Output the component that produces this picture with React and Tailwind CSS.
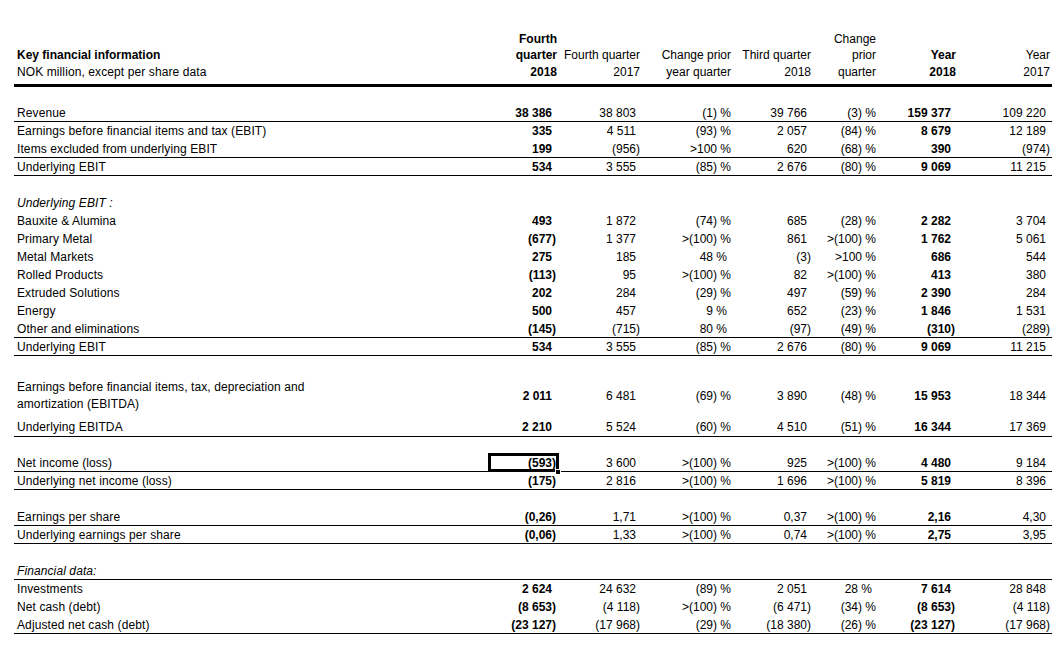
import React from "react";

const COLS = "grid grid-cols-[474px_69px_84px_91px_80px_65px_79px_95px]";

// [label, values, opts]
const ROWS = [
  { gap: "h-[17px]" },
  { label: "Revenue", v: ["38 386", "38 803", "(1) %", "39 766", "(3) %", "159 377", "109 220"], line: true },
  { label: "Earnings before financial items and tax (EBIT)", v: ["335", "4 511", "(93) %", "2 057", "(84) %", "8 679", "12 189"] },
  { label: "Items excluded from underlying EBIT", v: ["199", "(956)", ">100 %", "620", "(68) %", "390", "(974)"], line: true },
  { label: "Underlying EBIT", v: ["534", "3 555", "(85) %", "2 676", "(80) %", "9 069", "11 215"], line: true },
  { gap: "h-[18px]" },
  { label: "Underlying EBIT :", italic: true },
  { label: "Bauxite & Alumina", v: ["493", "1 872", "(74) %", "685", "(28) %", "2 282", "3 704"] },
  { label: "Primary Metal", v: ["(677)", "1 377", ">(100) %", "861", ">(100) %", "1 762", "5 061"] },
  { label: "Metal Markets", v: ["275", "185", "48 %", "(3)", ">100 %", "686", "544"] },
  { label: "Rolled Products", v: ["(113)", "95", ">(100) %", "82", ">(100) %", "413", "380"] },
  { label: "Extruded Solutions", v: ["202", "284", "(29) %", "497", "(59) %", "2 390", "284"] },
  { label: "Energy", v: ["500", "457", "9 %", "652", "(23) %", "1 846", "1 531"] },
  { label: "Other and eliminations", v: ["(145)", "(715)", "80 %", "(97)", "(49) %", "(310)", "(289)"], line: true },
  { label: "Underlying EBIT", v: ["534", "3 555", "(85) %", "2 676", "(80) %", "9 069", "11 215"], line: true },
  { gap: "h-[21px]" },
  {
    label: (
      <>
        Earnings before financial items, tax, depreciation and
        <br />
        amortization (EBITDA)
      </>
    ),
    v: ["2 011", "6 481", "(69) %", "3 890", "(48) %", "15 953", "18 344"],
    h: "h-[37px]",
  },
  { label: "Underlying EBITDA", v: ["2 210", "5 524", "(60) %", "4 510", "(51) %", "16 344", "17 369"], line: true, h: "h-[23px] pt-[4px]" },
  { gap: "h-[17px]" },
  { label: "Net income (loss)", v: ["(593)", "3 600", ">(100) %", "925", ">(100) %", "4 480", "9 184"], line: true, selected: true },
  { label: "Underlying net income (loss)", v: ["(175)", "2 816", ">(100) %", "1 696", ">(100) %", "5 819", "8 396"], line: true },
  { gap: "h-[18px]" },
  { label: "Earnings per share", v: ["(0,26)", "1,71", ">(100) %", "0,37", ">(100) %", "2,16", "4,30"], line: true },
  { label: "Underlying earnings per share", v: ["(0,06)", "1,33", ">(100) %", "0,74", ">(100) %", "2,75", "3,95"], line: true },
  { gap: "h-[18px]" },
  { label: "Financial data:", italic: true, line: true },
  { label: "Investments", v: ["2 624", "24 632", "(89) %", "2 051", "28 %", "7 614", "28 848"] },
  { label: "Net cash (debt)", v: ["(8 653)", "(4 118)", ">(100) %", "(6 471)", "(34) %", "(8 653)", "(4 118)"] },
  { label: "Adjusted net cash (debt)", v: ["(23 127)", "(17 968)", "(29) %", "(18 380)", "(26) %", "(23 127)", "(17 968)"], line: true },
];

// Excel-style: plain positives leave room for a closing paren
function Num({ s }) {
  const pad = !s.includes("(") && !s.startsWith(">");
  return (
    <>
      {s}
      {pad && <span className="invisible">)</span>}
    </>
  );
}

function Row({ r }) {
  const bold = (i) => i === 0 || i === 5;
  return (
    <div
      className={`${COLS} ${r.h || "h-[18px]"} items-center ${r.line ? "border-b border-black" : ""}`}
    >
      <div className={`pl-[3px] leading-[17px] tracking-[0.1px] ${r.italic ? "italic" : ""}`}>{r.label}</div>
      {(r.v || ["", "", "", "", "", "", ""]).map((s, i) => (
        <div
          key={i}
          className={`relative text-right pr-[1px] whitespace-nowrap ${bold(i) ? "font-bold" : ""}`}
        >
          <Num s={s} />
          {r.selected && i === 0 && (
            <>
              <div className="absolute left-0 top-[-1px] w-[71px] h-[18px] border-[3px] border-b-2 border-black" />
              <div className="absolute right-[-4px] bottom-[-3px] w-[6px] h-[6px] bg-black border border-white" />
            </>
          )}
        </div>
      ))}
    </div>
  );
}

export default function App() {
  return (
    <div
      className="min-h-[670px] w-[1056px] bg-white text-black text-[12px] pt-[30px] pl-[14px]"
      style={{ fontFamily: '"Liberation Sans", Arial, sans-serif' }}
    >
      <div className="w-[1038px]">
        <div className={`${COLS} h-[57px] items-end pb-[4px] leading-[16.5px] border-b-[3px] border-black`}>
          <div className="pl-[3px]">
            <div className="font-bold">Key financial information</div>
            <div className="tracking-[0.1px]">NOK million, except per share data</div>
          </div>
          <div className="text-right font-bold">
            Fourth
            <br />
            quarter
            <br />
            2018
          </div>
          <div className="text-right pr-[1px]">
            Fourth quarter
            <br />
            2017
          </div>
          <div className="text-right pr-[1px]">
            Change prior
            <br />
            year quarter
          </div>
          <div className="text-right pr-[1px]">
            Third quarter
            <br />
            2018
          </div>
          <div className="text-right pr-[1px]">
            Change
            <br />
            prior
            <br />
            quarter
          </div>
          <div className="text-right font-bold">
            Year
            <br />
            2018
          </div>
          <div className="text-right pr-[1px]">
            Year
            <br />
            2017
          </div>
        </div>

        {ROWS.map((r, i) => (r.gap ? <div key={i} className={r.gap} /> : <Row key={i} r={r} />))}
      </div>
    </div>
  );
}
